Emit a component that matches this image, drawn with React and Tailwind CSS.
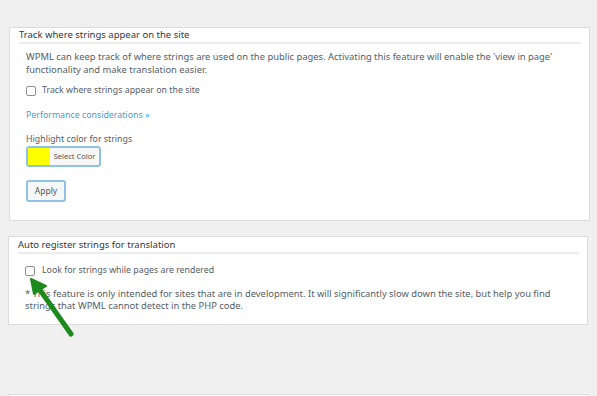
export default function App() {
  const font = { fontFamily: '"Noto Sans", "Open Sans", sans-serif' };
  return (
    <div className="relative w-[597px] h-[396px] overflow-hidden bg-[#f0f0f0] text-[#555d66]" style={font}>
      <div className="pt-[27px] pl-[9px] pr-[7px]">
        <div className="bg-white border border-[#dcdcdc] pl-[9px] pr-[8px] pt-[0px] pb-[18px]">
          <h3 className="text-[9.5px] leading-[13px] text-[#32373c] border-b-2 border-[#ececec] pb-[1px]">
            Track where strings appear on the site
          </h3>
          <div className="pl-[7px]">
            <p className="mt-[6px] text-[9.4px] leading-[13px]">
              WPML can keep track of where strings are used on the public pages. Activating this feature will enable the 'view in page' functionality and make translation easier.
            </p>
            <label className="mt-[8px] h-[14px] flex items-center gap-[6px] text-[8.8px]">
              <span className="w-[10px] h-[10px] rounded-[2px] border border-[#8c8f94] bg-white"></span>
              Track where strings appear on the site
            </label>
            <div className="mt-[10px] h-[14px] leading-[14px] text-[8.8px] text-[#4a9ad4]">Performance considerations »</div>
            <div className="mt-[12px] text-[8.8px] leading-[11px]">Highlight color for strings</div>
            <div className="mt-[1px] flex w-[75px] h-[21px] border-2 border-[#8ec3e3] rounded-[3px] overflow-hidden">
              <span className="w-[22px] bg-[#ffff00]"></span>
              <span className="flex-1 bg-[#f6f7f7] flex items-center justify-center text-[7.5px] text-[#555]">Select Color</span>
            </div>
            <button className="mt-[13px] w-[40px] h-[22px] border-2 border-[#8ec3e3] rounded-[3px] bg-[#f6f7f7] text-[8.5px] text-[#555]">
              Apply
            </button>
          </div>
        </div>
        <div className="mt-[15px] bg-white border border-[#dcdcdc] pl-[9px] pr-[8px] pt-[1px] pb-[12px] -ml-[1px] mr-[2px]">
          <h3 className="text-[9.5px] leading-[13px] text-[#32373c] border-b-2 border-[#ececec] pb-[1px]">
            Auto register strings for translation
          </h3>
          <div className="pl-[7px]">
            <label className="mt-[10px] h-[14px] flex items-center gap-[7px] text-[8.8px]">
              <span className="w-[10px] h-[10px] rounded-[2px] border border-[#8c8f94] bg-white"></span>
              Look for strings while pages are rendered
            </label>
            <p className="mt-[10px] text-[9.4px] leading-[12px]">
              * This feature is only intended for sites that are in development. It will significantly slow down the site, but help you find strings that WPML cannot detect in the PHP code.
            </p>
          </div>
        </div>
        <div className="mt-[69px] h-[20px] bg-white border border-[#dcdcdc] -ml-[1px] mr-[2px]"></div>
      </div>
      <svg className="absolute left-0 top-0" width="597" height="396" viewBox="0 0 597 396">
        <line x1="71" y1="334" x2="40" y2="290" stroke="#1d8a1d" strokeWidth="5" strokeLinecap="round" />
        <polygon points="31,279 46,286 34,294" fill="#1d8a1d" stroke="#1d8a1d" strokeWidth="2" strokeLinejoin="round" />
      </svg>
    </div>
  );
}
